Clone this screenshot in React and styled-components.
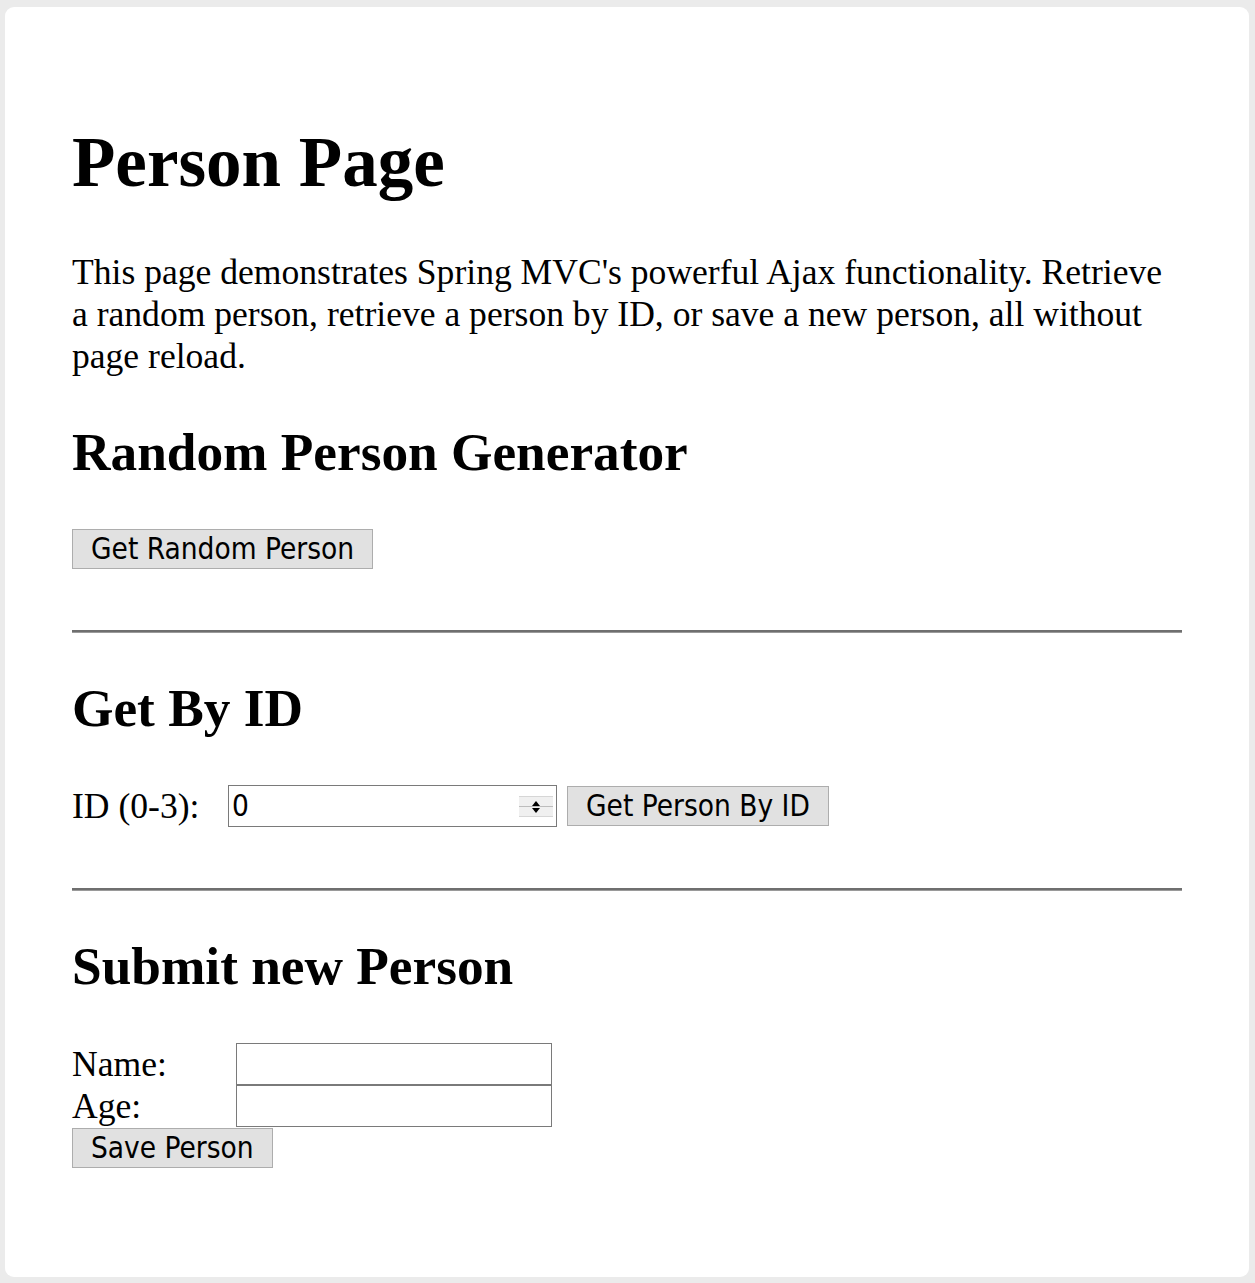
import React from "react";
import styled, { createGlobalStyle } from "styled-components";

const GlobalStyle = createGlobalStyle`
  html, body {
    margin: 0;
    padding: 0;
    background: #ebebeb;
  }
  body {
    padding: 7px 6px 6px 5px;
    font-family: "Liberation Serif", "Times New Roman", serif;
    color: #000;
  }
`;

const Card = styled.div`
  background: #fff;
  border-radius: 9px;
  padding: 66px 67px 109px;
  min-height: 1270px;
  box-sizing: border-box;
`;

const Title = styled.h1`
  font-size: 71px;
  line-height: 83px;
  font-weight: bold;
  margin: 48px 0 47px;
`;

const Intro = styled.p`
  font-size: 35.6px;
  line-height: 42px;
  margin: 0;
`;

const Heading = styled.h2`
  font-size: 53.3px;
  line-height: 62px;
  font-weight: bold;
  margin: 45px 0 45px;
`;

const Button = styled.button`
  font-family: "DejaVu Sans Condensed", "DejaVu Sans", sans-serif;
  font-size: 29.5px;
  line-height: 36px;
  color: #000;
  background: #e1e1e1;
  border: 1px solid #adadad;
  border-radius: 0;
  padding: 1px 18px;
  height: 40px;
  margin: 0;
  cursor: pointer;
`;

const Block = styled.div`
  display: flex;
  align-items: center;
  margin-top: ${(props) => props.top || 44}px;
`;

const Rule = styled.hr`
  border: none;
  border-top: 2px solid #6f6f6f;
  border-bottom: 1px solid #9a9a9a;
  height: 0;
  margin: ${(props) => props.top}px 0 0;
`;

const Label = styled.span`
  font-size: 35.6px;
  line-height: 42px;
  width: ${(props) => props.w}px;
  flex: none;
`;

const FieldWrap = styled.div`
  position: relative;
  width: ${(props) => props.w}px;
  height: 42px;
  margin-right: 10px;
`;

const Field = styled.input`
  box-sizing: border-box;
  width: 100%;
  height: 100%;
  border: 1px solid #7a7a7a;
  border-radius: 0;
  padding: 0 3px;
  margin: 0;
  font-family: "DejaVu Sans Condensed", "DejaVu Sans", sans-serif;
  font-size: 29.5px;
  color: #000;
  outline: none;
  background: #fff;
`;

const Spinner = styled.div`
  position: absolute;
  right: 4px;
  top: 11px;
  width: 34px;
  height: 19px;
  background: #f0f0f0;
  border-top: 1px solid #d6d6d6;
  border-bottom: 1px solid #d6d6d6;
  display: flex;
  flex-direction: column;
  align-items: center;
  justify-content: center;
  gap: 2px;
`;

const Arrow = styled.span`
  width: 0;
  height: 0;
  border-left: 4px solid transparent;
  border-right: 4px solid transparent;
  ${(props) =>
    props.up
      ? "border-bottom: 5px solid #000;"
      : "border-top: 5px solid #000;"}
`;

const Divider = styled.span`
  position: absolute;
  left: 0;
  right: 0;
  top: 9px;
  height: 1px;
  background: #bdbdbd;
`;

const Form = styled.div`
  display: grid;
  grid-template-columns: 164px 316px;
  margin-top: 45px;
  align-items: center;
`;

const FormField = styled.input`
  box-sizing: border-box;
  width: 316px;
  height: 42px;
  border: 1px solid #7a7a7a;
  border-radius: 0;
  margin: 0;
  padding: 0 3px;
  font-size: 29.5px;
  outline: none;
`;

const FormActions = styled.div`
  grid-column: 1 / -1;
  padding-top: 1px;
`;

export default function App() {
  return (
    <>
      <GlobalStyle />
      <Card>
        <Title>Person Page</Title>
        <Intro>
          This page demonstrates Spring MVC's powerful Ajax functionality.
          Retrieve a random person, retrieve a person by ID, or save a new
          person, all without page reload.
        </Intro>

        <Heading>Random Person Generator</Heading>
        <Block top={44}>
          <Button>Get Random Person</Button>
        </Block>
        <Rule top={61} />

        <Heading>Get By ID</Heading>
        <Block top={43}>
          <Label w={156}>ID (0-3):</Label>
          <FieldWrap w={329}>
            <Field type="text" defaultValue="0" />
            <Spinner>
              <Arrow up />
              <Divider />
              <Arrow />
            </Spinner>
          </FieldWrap>
          <Button>Get Person By ID</Button>
        </Block>
        <Rule top={61} />

        <Heading>Submit new Person</Heading>
        <Form>
          <Label w={164}>Name:</Label>
          <FormField type="text" />
          <Label w={164}>Age:</Label>
          <FormField type="text" />
          <FormActions>
            <Button>Save Person</Button>
          </FormActions>
        </Form>
      </Card>
    </>
  );
}
